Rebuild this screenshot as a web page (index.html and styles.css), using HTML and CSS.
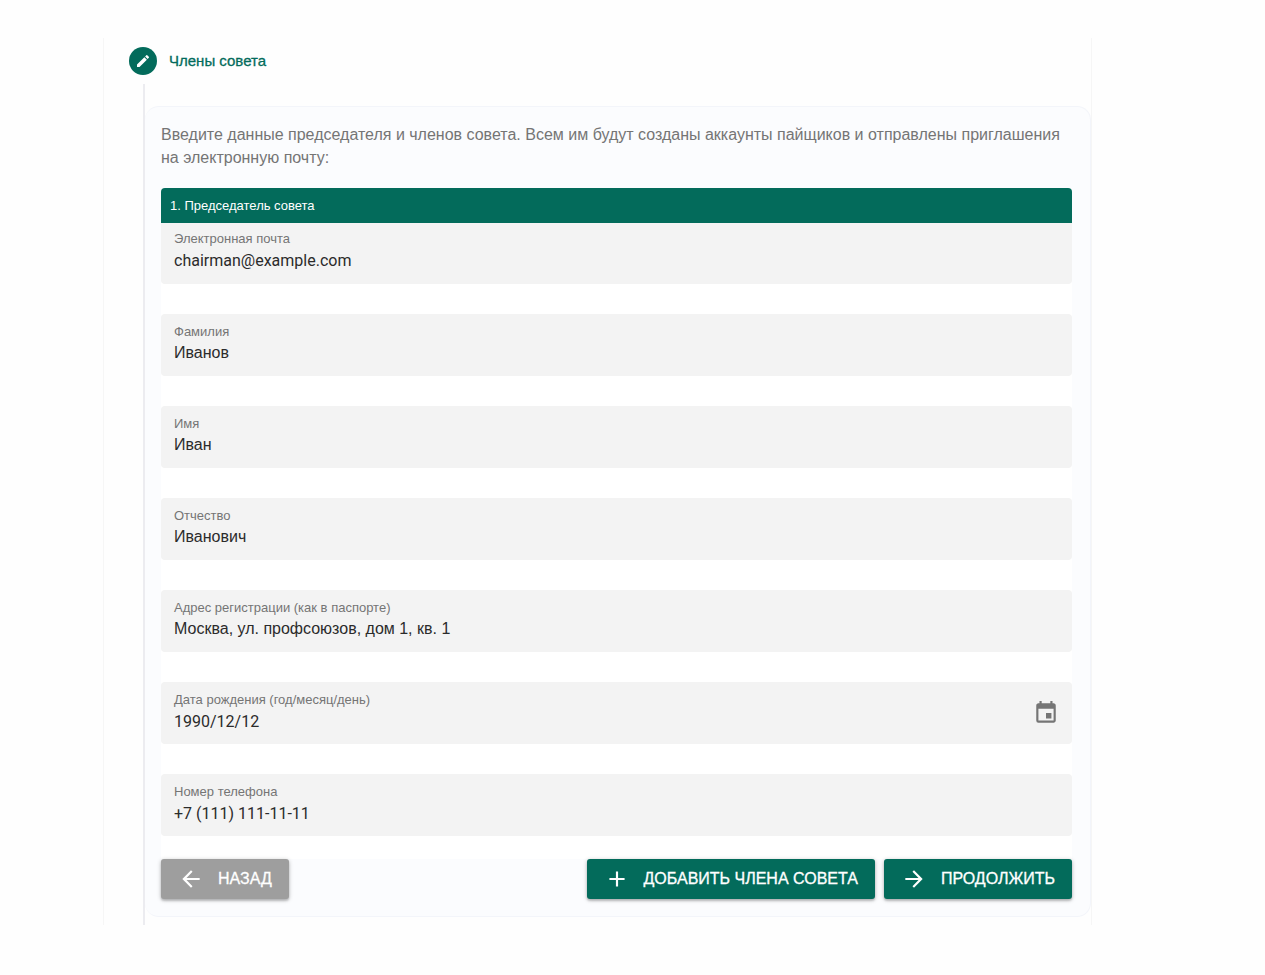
FILE: index.html
```html
<!DOCTYPE html>
<html lang="ru">
<head>
    <meta charset="UTF-8">
    <meta name="viewport" content="width=device-width, initial-scale=1.0">
    <title>Члены совета</title>
    <link rel="stylesheet" href="styles.css">
</head>
<body>
    <main class="stepper">
        <div class="step-header">
            <span class="step-dot">
                <svg viewBox="0 0 24 24" width="16" height="16"><path d="M3 17.25V21h3.75L17.81 9.94l-3.75-3.75L3 17.25zM20.71 7.04a1 1 0 0 0 0-1.41l-2.34-2.34a1 1 0 0 0-1.41 0l-1.83 1.83 3.75 3.75 1.83-1.83z"/></svg>
            </span>
            <h1 class="step-title">Члены совета</h1>
        </div>

        <div class="step-content">
            <form class="card">
                <p class="hint">Введите данные председателя и членов совета. Всем им будут созданы аккаунты пайщиков и отправлены приглашения на электронную почту:</p>

                <section class="member">
                    <h2 class="member-title">1. Председатель совета</h2>
                    <div class="fields">
                        <div class="field">
                            <label for="email">Электронная почта</label>
                            <input class="latin" type="email" id="email" value="chairman@example.com">
                        </div>
                        <div class="field">
                            <label for="lastName">Фамилия</label>
                            <input type="text" id="lastName" value="Иванов">
                        </div>
                        <div class="field">
                            <label for="firstName">Имя</label>
                            <input type="text" id="firstName" value="Иван">
                        </div>
                        <div class="field">
                            <label for="middleName">Отчество</label>
                            <input type="text" id="middleName" value="Иванович">
                        </div>
                        <div class="field">
                            <label for="address">Адрес регистрации (как в паспорте)</label>
                            <input type="text" id="address" value="Москва, ул. профсоюзов, дом 1, кв. 1">
                        </div>
                        <div class="field field-date">
                            <div class="field-main">
                                <label for="birthdate">Дата рождения (год/месяц/день)</label>
                                <input class="latin" type="text" id="birthdate" value="1990/12/12">
                            </div>
                            <button type="button" class="icon-btn" aria-label="Выбрать дату">
                                <svg viewBox="0 0 24 24" width="26" height="26"><path d="M17 12h-5v5h5v-5zM16 1v2H8V1H6v2H5c-1.11 0-1.99.9-1.99 2L3 19a2 2 0 0 0 2 2h14c1.1 0 2-.9 2-2V5c0-1.1-.9-2-2-2h-1V1h-2zm3 18H5V8h14v11z"/></svg>
                            </button>
                        </div>
                        <div class="field">
                            <label for="phone">Номер телефона</label>
                            <input class="latin" type="tel" id="phone" value="+7 (111) 111-11-11">
                        </div>
                    </div>
                </section>

                <div class="actions">
                    <button type="button" class="btn btn-grey">
                        <svg viewBox="0 0 24 24" width="26" height="26"><path d="M20 11H7.83l5.59-5.59L12 4l-8 8 8 8 1.41-1.41L7.83 13H20v-2z"/></svg>
                        Назад
                    </button>
                    <div class="actions-right">
                        <button type="button" class="btn">
                            <svg viewBox="0 0 24 24" width="26" height="26"><path d="M19 13h-6v6h-2v-6H5v-2h6V5h2v6h6v2z"/></svg>
                            Добавить члена совета
                        </button>
                        <button type="submit" class="btn">
                            <svg viewBox="0 0 24 24" width="26" height="26"><path d="M12 4l-1.41 1.41L16.17 11H4v2h12.17l-5.58 5.59L12 20l8-8-8-8z"/></svg>
                            Продолжить
                        </button>
                    </div>
                </div>
            </form>
        </div>
    </main>
</body>
</html>
```
FILE: styles.css
```css
:root {
    --primary: #036b5b;
    --grey: #9e9e9e;
    --card-bg: #fbfcfe;
    --field-bg: #f3f3f3;
    --text: #2b2b2b;
    --text-muted: #757575;
}

* {
    box-sizing: border-box;
}

body {
    margin: 0;
    padding: 38px 173px 51px 103px;
    background: #fefefe;
    color: var(--text);
    font-family: "Liberation Sans", Arial, sans-serif;
}

svg {
    display: block;
    fill: currentColor;
}

.stepper {
    padding-left: 25px;
    border-left: 1px solid #f6f6f6;
    border-right: 1px solid #f6f6f6;
}

/* Step header */
.step-header {
    display: flex;
    align-items: center;
    gap: 12px;
    height: 46px;
}

.step-dot {
    display: flex;
    align-items: center;
    justify-content: center;
    width: 28px;
    height: 28px;
    border-radius: 50%;
    background: var(--primary);
    color: #fff;
}

.step-title {
    margin: 0;
    font-size: 15px;
    font-weight: 400;
    line-height: 20px;
    color: var(--primary);
    -webkit-text-stroke: 0.3px var(--primary);
}

/* Vertical line running down from the dot */
.step-content {
    margin-left: 14px;
    padding: 22px 0 8px;
    border-left: 2px solid #ececf0;
}

.card {
    padding: 16px 18px 17px 16px;
    border: 1px solid #f3f5fa;
    border-left: none;
    border-radius: 14px;
    background: var(--card-bg);
}

.hint {
    margin: 0 0 19px;
    font-size: 16px;
    line-height: 23px;
    color: var(--text-muted);
}

/* Council member */
.member {
    padding-bottom: 23px;
    border-radius: 4px 4px 0 0;
    background: #fff;
}

.member-title {
    margin: 0;
    padding: 0 9px;
    border-radius: 4px 4px 0 0;
    background: var(--primary);
    color: #fff;
    font-size: 13px;
    font-weight: 400;
    line-height: 35px;
}

.fields {
    display: flex;
    flex-direction: column;
    gap: 30px;
}

.field {
    height: 62px;
    padding: 10px 13px;
    border-radius: 4px;
    background: var(--field-bg);
}

/* The first field sits right under the member title */
.field:first-child {
    height: 61px;
    padding-top: 8px;
    border-radius: 0 0 4px 4px;
}

.field label {
    display: block;
    font-size: 13px;
    line-height: 16px;
    color: var(--text-muted);
}

.field input {
    display: block;
    width: 100%;
    height: 26px;
    padding: 0;
    border: none;
    outline: none;
    background: none;
    color: var(--text);
    font-family: inherit;
    font-size: 16px;
}

.field .latin {
    font-family: Roboto, sans-serif;
}

.field-date {
    display: flex;
    align-items: center;
}

.field-main {
    flex: 1;
}

.icon-btn {
    padding: 0;
    border: none;
    background: none;
    color: var(--text-muted);
    cursor: pointer;
}

/* Buttons */
.actions,
.actions-right {
    display: flex;
    justify-content: space-between;
    gap: 9px;
}

.btn {
    display: flex;
    align-items: center;
    gap: 14px;
    height: 40px;
    padding: 0 17px;
    border: none;
    border-radius: 3px;
    background: var(--primary);
    box-shadow: 0 1px 4px rgba(0, 0, 0, 0.25), 0 2px 2px rgba(0, 0, 0, 0.15);
    color: #fff;
    font-family: inherit;
    font-size: 16px;
    text-transform: uppercase;
    cursor: pointer;
    -webkit-text-stroke: 0.3px #fff;
}

.btn-grey {
    background: var(--grey);
}
```
